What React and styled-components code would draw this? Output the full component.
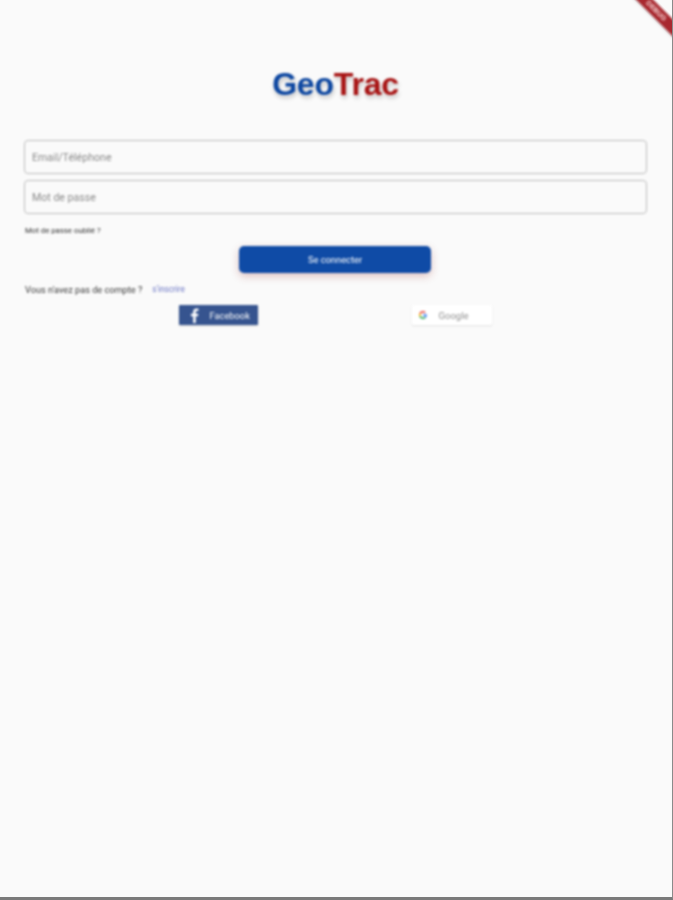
import React from "react";
import styled, { createGlobalStyle } from "styled-components";

const GlobalStyle = createGlobalStyle`
  html, body {
    margin: 0;
    padding: 0;
    background: #fafafa;
  }
`;

const Screen = styled.div`
  position: relative;
  box-sizing: border-box;
  width: 673px;
  height: 900px;
  overflow: hidden;
  background: #fafafa;
  border-right: 1px solid #8a8a8a;
  border-bottom: 3px solid #7a7a7a;
  font-family: Roboto, "Liberation Sans", sans-serif;
`;

const Content = styled.main`
  display: flex;
  flex-direction: column;
  padding: 66px 25px 0 24px;
  filter: blur(0.8px);
`;

const Logo = styled.h1`
  margin: 0 0 38px;
  height: 36px;
  line-height: 36px;
  text-align: center;
  font-family: "Liberation Sans", Arial, sans-serif;
  font-size: 32px;
  font-weight: 700;
  letter-spacing: -0.2px;
  color: #0d47a1;
  text-shadow: 1px 3px 4px rgba(0, 0, 0, 0.22);
`;

const LogoAccent = styled.span`
  color: #a81414;
`;

const Field = styled.div`
  box-sizing: border-box;
  height: 34px;
  margin-bottom: 6px;
  padding-left: 7px;
  display: flex;
  align-items: center;
  border: 1px solid #bdbdbd;
  border-radius: 4px;
  font-size: 10.6px;
  color: #8a8a8a;
`;

const Forgot = styled.div`
  margin: 1px 0 0 1px;
  height: 20px;
  line-height: 20px;
  font-size: 7.8px;
  color: #333;
`;

const SubmitRow = styled.div`
  display: flex;
  justify-content: center;
  margin: 5px 0 0 -1px;
`;

const Submit = styled.button`
  width: 192px;
  height: 27px;
  padding: 0;
  border: 0;
  border-radius: 5px;
  background: #0f4ba6;
  color: #fff;
  font-family: inherit;
  font-size: 9.3px;
  box-shadow: 0 3px 8px rgba(150, 40, 40, 0.28);
`;

const SignupRow = styled.div`
  display: flex;
  align-items: center;
  gap: 10px;
  height: 16px;
  margin: 8px 0 0 1px;
  font-size: 9.2px;
  color: #3a3a3a;
`;

const InactiveLink = styled.span`
  color: #6a74c4;
  font-size: 8.2px;
`;

const Socials = styled.div`
  display: flex;
  justify-content: center;
  gap: 154px;
  margin: 8px 0 0 -1px;
`;

const SocialButton = styled.div`
  box-sizing: border-box;
  width: ${(p) => (p.$google ? "80px" : "79px")};
  height: 20px;
  display: flex;
  align-items: center;
  border-radius: 1px;
  font-size: ${(p) => (p.$google ? "9.5px" : "9.3px")};
  background: ${(p) => (p.$google ? "#fff" : "#36548f")};
  color: ${(p) => (p.$google ? "#8f8f8f" : "#fff")};
  padding-left: ${(p) => (p.$google ? "7px" : "10px")};
  gap: ${(p) => (p.$google ? "12px" : "10px")};
  box-shadow: 0 1px 2px rgba(0, 0, 0, ${(p) => (p.$google ? "0.1" : "0.18")});
`;

const DebugBanner = styled.div`
  position: absolute;
  top: 5px;
  right: -22px;
  width: 76px;
  height: 12px;
  line-height: 12px;
  transform: rotate(45deg);
  background: #a8282f;
  color: #f6d6d6;
  text-align: center;
  font-family: "Liberation Sans", sans-serif;
  font-size: 7px;
  font-weight: 700;
  filter: blur(0.8px);
  box-shadow: 0 1px 2px rgba(0, 0, 0, 0.2);
`;

const FacebookIcon = () => (
  <svg width="11" height="15" viewBox="0 0 10 18" aria-hidden="true">
    <path
      fill="#fff"
      d="M6.5 18V10h2.7l.4-3.1H6.500V5c0-.9.3-1.500 1.600-1.500h1.600V.7C9.400.7 8.500.6 7.400.6 5 .6 3.400 2 3.400 4.700v2.200H.7V10h2.700v8z"
    />
  </svg>
);

const GoogleIcon = () => (
  <svg width="8" height="8" viewBox="0 0 48 48" aria-hidden="true">
    <path fill="#EA4335" d="M24 9.500c3.500 0 6.700 1.200 9.200 3.600l6.900-6.900C35.900 2.400 30.500 0 24 0 14.600 0 6.500 5.400 2.600 13.200l8 6.200C12.500 13.600 17.800 9.500 24 9.500z" />
    <path fill="#4285F4" d="M47 24.500c0-1.600-.1-3.100-.4-4.500H24v9h12.900c-.6 3-2.200 5.500-4.700 7.200l7.700 6C44.400 37.900 47 31.800 47 24.500z" />
    <path fill="#FBBC05" d="M10.500 28.600c-.5-1.400-.8-3-.8-4.600s.3-3.200.8-4.600l-8-6.200C.9 16.500 0 20.100 0 24s.9 7.500 2.600 10.800z" />
    <path fill="#34A853" d="M24 48c6.500 0 11.900-2.100 15.900-5.800l-7.700-6c-2.200 1.400-4.900 2.300-8.200 2.300-6.200 0-11.500-4.200-13.400-9.800l-8 6.200C6.500 42.600 14.600 48 24 48z" />
  </svg>
);

export default function App() {
  return (
    <>
      <GlobalStyle />
      <Screen>
        <Content>
          <Logo>
            Geo<LogoAccent>Trac</LogoAccent>
          </Logo>
          <Field>Email/Téléphone</Field>
          <Field>Mot de passe</Field>
          <Forgot>Mot de passe oublié ?</Forgot>
          <SubmitRow>
            <Submit type="button">Se connecter</Submit>
          </SubmitRow>
          <SignupRow>
            <span>Vous n'avez pas de compte ?</span>
            <InactiveLink>s'inscrire</InactiveLink>
          </SignupRow>
          <Socials>
            <SocialButton>
              <FacebookIcon />
              <span>Facebook</span>
            </SocialButton>
            <SocialButton $google>
              <GoogleIcon />
              <span>Google</span>
            </SocialButton>
          </Socials>
        </Content>
        <DebugBanner>DEBUG</DebugBanner>
      </Screen>
    </>
  );
}
